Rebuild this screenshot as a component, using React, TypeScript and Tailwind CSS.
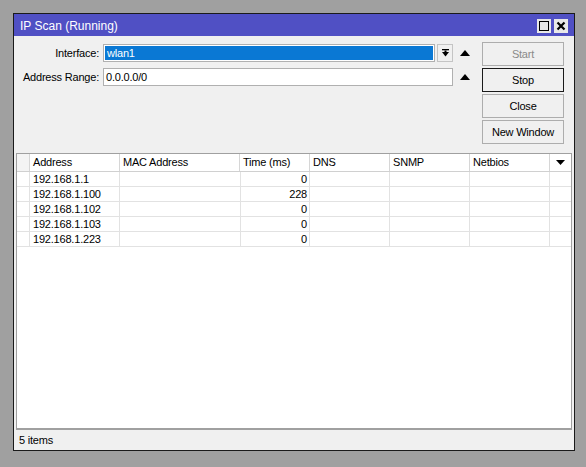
const cols = [
  { key: 'pad', label: '', w: 13 },
  { key: 'addr', label: 'Address', w: 90 },
  { key: 'mac', label: 'MAC Address', w: 120 },
  { key: 'time', label: 'Time (ms)', w: 70 },
  { key: 'dns', label: 'DNS', w: 80 },
  { key: 'snmp', label: 'SNMP', w: 80 },
  { key: 'netbios', label: 'Netbios', w: 80 },
];

const rows = [
  { addr: '192.168.1.1', time: '0' },
  { addr: '192.168.1.100', time: '228' },
  { addr: '192.168.1.102', time: '0' },
  { addr: '192.168.1.103', time: '0' },
  { addr: '192.168.1.223', time: '0' },
];

function UpArrow() {
  return (
    <svg width="10" height="6" viewBox="0 0 10 6" className="shrink-0">
      <path d="M5 0 L10 6 L0 6 Z" fill="#000" />
    </svg>
  );
}

function WinButton({ label, disabled, active }: { label: string; disabled?: boolean; active?: boolean }) {
  return (
    <button
      className={`flex h-[24px] w-[82px] items-center justify-center border bg-[#f0f0f0] ${
        active ? 'border-[#1a1a1a]' : 'border-[#adadad]'
      } ${disabled ? 'text-[#8a8a8a]' : 'text-black'}`}
    >
      {label}
    </button>
  );
}

export default function App() {
  return (
    <div
      className="h-[467px] w-[586px] bg-[#a0a0a0] pl-[13px] pt-[13px] text-[11px] tracking-[-0.2px] text-black"
      style={{ fontFamily: '"Liberation Sans", Arial, sans-serif' }}
    >
      <div className="flex h-[438px] w-[562px] flex-col border border-[#1a1a1a] bg-[#f0f0f0]">
        {/* title bar */}
        <div className="flex h-[22px] items-center justify-between bg-[#5050c4] pl-[6px] pr-[6px] pt-[2px]">
          <span className="text-[12px] tracking-normal text-white">IP Scan (Running)</span>
          <div className="flex gap-[3px]">
            <div className="flex h-[14px] w-[14px] items-center justify-center bg-[#e8e8e8]">
              <div className="h-[10px] w-[10px] border-[1.5px] border-black" />
            </div>
            <div className="flex h-[14px] w-[14px] items-center justify-center bg-[#e8e8e8]">
              <svg width="10" height="10" viewBox="0 0 10 10">
                <path d="M1.5 1.5 L8.5 8.5 M8.5 1.5 L1.5 8.5" stroke="#000" strokeWidth="2.2" />
              </svg>
            </div>
          </div>
        </div>

        {/* form */}
        <div className="flex h-[117px] pt-[6px]">
          <div className="flex w-[465px] flex-col gap-[6px] pt-[2px]">
            <div className="flex h-[18px] items-center">
              <span className="w-[85px] text-right">Interface:</span>
              <div className="ml-[4px] flex h-[18px] w-[332px] items-center border border-[#b0b0b0] bg-white p-[1px]">
                <div className="flex h-full w-full items-center bg-[#0a78d4] px-[2px] text-white">wlan1</div>
              </div>
              <div className="ml-[2px] flex h-[18px] w-[16px] items-center justify-center border border-[#c4c4c4] bg-[#f0f0f0]">
                <svg width="9" height="10" viewBox="0 0 9 10">
                  <rect x="1" y="1" width="7" height="1.3" fill="#000" />
                  <path d="M1 4 L8 4 L4.5 8.5 Z" fill="#000" />
                  <rect x="3.5" y="2.5" width="2" height="2" fill="#000" />
                </svg>
              </div>
              <div className="ml-[7px]">
                <UpArrow />
              </div>
            </div>
            <div className="flex h-[18px] items-center">
              <span className="w-[85px] text-right">Address Range:</span>
              <div className="ml-[4px] flex h-[18px] w-[350px] items-center border border-[#b0b0b0] bg-white px-[2px]">
                0.0.0.0/0
              </div>
              <div className="ml-[7px]">
                <UpArrow />
              </div>
            </div>
          </div>
          <div className="ml-[3px] flex flex-col gap-[2px]">
            <WinButton label="Start" disabled />
            <WinButton label="Stop" active />
            <WinButton label="Close" />
            <WinButton label="New Window" />
          </div>
        </div>

        {/* table */}
        <div className="mx-[2px] flex flex-1 flex-col border border-[#a0a0a0] border-b-[2px] bg-white">
          <div className="flex h-[18px] border-b border-[#d0d0d0]">
            {cols.map((c) => (
              <div
                key={c.key}
                className={`flex h-full items-center border-r border-[#d6d6d6] pl-[3px] ${c.key === 'pad' ? 'bg-[#f4f4f4]' : ''}`}
                style={{ width: c.w }}
              >
                {c.label}
              </div>
            ))}
            <div className="flex h-full flex-1 items-center justify-center">
              <svg width="9" height="5" viewBox="0 0 9 5">
                <path d="M0 0 L9 0 L4.5 5 Z" fill="#000" />
              </svg>
            </div>
          </div>
          {rows.map((r) => (
            <div key={r.addr} className="flex h-[15px] border-b border-[#e2e2e2]">
              <div className="h-full border-r border-[#e2e2e2]" style={{ width: 13 }} />
              <div className="flex h-full items-center border-r border-[#e2e2e2] pl-[3px]" style={{ width: 90 }}>
                {r.addr}
              </div>
              <div className="h-full" style={{ width: 120 }} />
              <div className="flex h-full items-center justify-end border-r border-l border-[#e2e2e2] pr-[2px]" style={{ width: 70 }}>
                {r.time}
              </div>
              <div className="h-full border-r border-[#e2e2e2]" style={{ width: 80 }} />
              <div className="h-full border-r border-[#e2e2e2]" style={{ width: 80 }} />
              <div className="h-full border-r border-[#e2e2e2]" style={{ width: 80 }} />
            </div>
          ))}
        </div>

        {/* status bar */}
        <div className="flex h-[20px] items-center pl-[5px]">5 items</div>
      </div>
    </div>
  );
}
